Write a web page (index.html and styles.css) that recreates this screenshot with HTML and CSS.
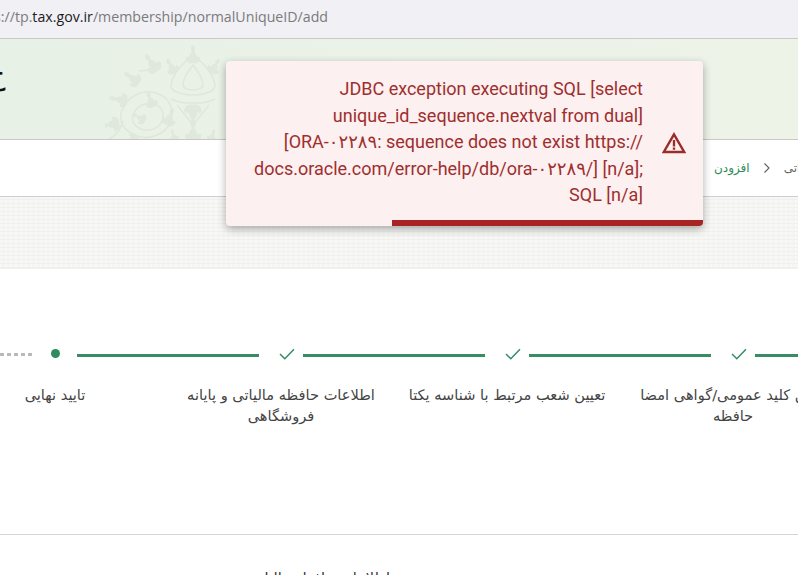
FILE: index.html
```html
<!DOCTYPE html>
<html lang="fa">
<head>
<meta charset="utf-8">
<title>normalUniqueID</title>
<link rel="stylesheet" href="styles.css">
</head>
<body>
<div class="page">
  <div class="addressbar"><span class="url">s://tp.<b class="host">tax.gov.ir</b>/membership/normalUniqueID/add</span></div>
  <header class="banner">
    <span class="brand" dir="rtl">ج</span>
    <svg class="ornament" viewBox="0 0 180 100" width="180" height="100" aria-hidden="true">
      <defs>
        <path id="leaf" d="M0 0c-5-3-6-9 0-14c6 5 5 11 0 14z"/>
        <g id="spray">
          <use href="#leaf"/>
          <use href="#leaf" transform="rotate(-50) scale(.75)"/>
          <use href="#leaf" transform="rotate(50) scale(.75)"/>
          <use href="#leaf" transform="translate(0 -12) scale(.6)"/>
        </g>
      </defs>
      <g class="orn-soft">
        <g class="orn-fill">
          <use href="#spray" transform="translate(88 18) scale(.9)"/>
          <use href="#spray" transform="translate(70 28) rotate(-30) scale(.8)"/>
          <use href="#spray" transform="translate(52 26) rotate(-35)"/>
          <use href="#spray" transform="translate(34 38) rotate(-55) scale(.9)"/>
          <use href="#spray" transform="translate(22 56) rotate(-80) scale(.9)"/>
          <use href="#spray" transform="translate(14 78) rotate(-100) scale(.9)"/>
          <use href="#spray" transform="translate(32 92) rotate(-125) scale(.8)"/>
          <use href="#spray" transform="translate(48 62) rotate(-20) scale(.8)"/>
          <use href="#spray" transform="translate(62 80) rotate(20) scale(.9)"/>
          <use href="#spray" transform="translate(40 76) rotate(-60) scale(.7)"/>
          <use href="#spray" transform="translate(88 60) rotate(180) scale(1.1)"/>
          <use href="#spray" transform="translate(106 28) rotate(30) scale(.8)"/>
          <use href="#spray" transform="translate(88 96) scale(1)"/>
          <use href="#spray" transform="translate(70 96) rotate(-15) scale(.6)"/>
          <use href="#spray" transform="translate(106 96) rotate(15) scale(.6)"/>
        </g>
        <g class="orn-line">
          <path d="M88 8c-8 10-20 18-22 32-1 6 10 10 22 10s23-4 22-10c-2-14-14-22-22-32z"/>
          <path d="M88 20c-4 6-10 12-10 20 0 3 5 5 10 5s10-2 10-5c0-8-6-14-10-20z"/>
          <path d="M16 68c6-18 24-26 40-18 10 5 14 18 8 30-6 10-22 16-34 10-10-4-16-12-14-22z"/>
          <path d="M28 70c4-10 14-14 24-10 6 3 8 11 4 18-4 6-13 9-20 6-6-2-10-8-8-14z"/>
          <path d="M66 54c8 4 14 4 22 4s14 0 22-4M72 60l16 20 16-20"/>
          <path d="M4 94c8-4 12-10 14-18M54 18c-6 6-12 8-20 8"/>
        </g>
      </g>
    </svg>
  </header>
  <nav class="crumbs">
    <span class="crumb current">افزودن</span>
    <svg class="chev" viewBox="0 0 8 12" width="8" height="12" aria-hidden="true"><path d="M1.5 1.5 6 6l-4.5 4.5" fill="none" stroke="#666" stroke-width="1.2"/></svg>
    <span class="crumb">مالیاتی</span>
  </nav>
  <div class="texture"></div>
  <main class="content">
    <section class="stepper">
      <div class="marks">
        <span class="dots"></span>
        <span class="node"><i class="dot"></i></span>
        <span class="line"></span>
        <span class="node"><svg class="tick" viewBox="0 0 16 12" width="16" height="12" aria-hidden="true"><path d="M1 6l4.8 4.8L15 1.2" fill="none" stroke="#2e8b5f" stroke-width="1.4"/></svg></span>
        <span class="line"></span>
        <span class="node"><svg class="tick" viewBox="0 0 16 12" width="16" height="12" aria-hidden="true"><path d="M1 6l4.8 4.8L15 1.2" fill="none" stroke="#2e8b5f" stroke-width="1.4"/></svg></span>
        <span class="line"></span>
        <span class="node"><svg class="tick" viewBox="0 0 16 12" width="16" height="12" aria-hidden="true"><path d="M1 6l4.8 4.8L15 1.2" fill="none" stroke="#2e8b5f" stroke-width="1.4"/></svg></span>
        <span class="line"></span>
      </div>
      <div class="labels">
        <div class="label">تایید نهایی</div>
        <div class="label">اطلاعات حافظه مالیاتی و پایانه فروشگاهی</div>
        <div class="label">تعیین شعب مرتبط با شناسه یکتا</div>
        <div class="label">تعیین کلید عمومی/گواهی امضا حافظه</div>
      </div>
    </section>
    <hr class="rule">
    <p class="subhead" dir="rtl">اطلاعات حافظه مالیاتی</p>
  </main>
  <div class="toast" role="alert">
    <p class="toast-text">JDBC exception executing SQL [select unique_id_sequence.nextval from dual] [ORA-۰۲۲۸۹: sequence does not exist https://<wbr>docs.oracle.com/error&#8209;help/db/ora-۰۲۲۸۹/] [n/a]; SQL [n/a]</p>
    <svg class="toast-icon" viewBox="0 0 24 22" width="24" height="22" aria-hidden="true">
      <path d="M12 2.4 1.8 20h20.4z" fill="none" stroke="#9c2c2c" stroke-width="2.4" stroke-linejoin="miter"/>
      <path d="M12 8v6.5M12 15.6v2.2" stroke="#9c2c2c" stroke-width="2.4" fill="none"/>
    </svg>
    <div class="toast-progress"></div>
  </div>
</div>
</body>
</html>
```
FILE: styles.css
```css
* { box-sizing: border-box; }
html, body { margin: 0; padding: 0; }
body { background: #fff; font-family: Roboto, "DejaVu Sans", sans-serif; }
.page { position: relative; width: 798px; height: 575px; overflow: hidden; }

.addressbar { height: 39px; background: #f0f0f5; border-bottom: 1px solid #c9c9c9; padding-top: 7px; }
.url { display: block; margin-left: -6px; font: 14.2px/20px "Open Sans", sans-serif; color: #7b7b7b; white-space: nowrap; }
.host { font-weight: 400; color: #1c1c1c; }

.banner { position: relative; height: 100px; background: linear-gradient(90deg, #e8f1e6, #eef3e8); overflow: hidden; display: flex; align-items: center; }
.brand { margin-left: -14px; margin-top: -30px; font: 400 30px/40px "DejaVu Sans", sans-serif; color: #111; }
.ornament { position: absolute; left: 105px; top: 6px; }
.orn-soft { filter: blur(.7px); }
.orn-fill { fill: #e0e8dc; }
.orn-line { fill: none; stroke: #dfe7db; stroke-width: 1.5; }

.crumbs { height: 58px; background: #fff; border-top: 1px solid #c9c9c9; border-bottom: 1px solid #cfcfcf; display: flex; justify-content: flex-end; align-items: center; gap: 13px; margin-right: -20px; font: 12px/16px "DejaVu Sans", sans-serif; }
.crumb { color: #666; }
.current { color: #2e8b57; }

.texture { height: 72px; background-color: #f5f5f3; background-image: repeating-linear-gradient(0deg, #f0f0ed 0 1px, transparent 1px 4px), repeating-linear-gradient(90deg, #f8f8f6 0 2px, transparent 2px 5px); border-bottom: 1px solid #f0f0f0; }

.content { background: #fff; }
.stepper { height: 265px; padding-top: 76px; }
.marks { position: relative; display: flex; align-items: center; height: 18px; width: 1100px; padding-left: 33px; }
.node { width: 44px; flex: none; display: flex; justify-content: center; align-items: center; padding-left: 12px; }
.node:nth-child(2) { padding-left: 0; }
.dot { width: 9px; height: 9px; border-radius: 50%; background: #2e8b5f; display: block; margin-top: -1px; }
.line { width: 182px; height: 3px; background: #388e62; flex: none; margin-top: 2px; }
.dots { position: absolute; left: 0; top: 8px; width: 33px; height: 3px; background: repeating-linear-gradient(90deg, #b9b9b9 0 4px, transparent 4px 7px); }
.labels { display: flex; width: 1100px; margin-left: -58px; margin-top: 21px; }
.label { width: 226px; flex: none; padding: 0 8px; text-align: center; direction: rtl; font: 14.6px/21px "DejaVu Sans", sans-serif; color: #444; }

.rule { margin: 0; border: 0; border-top: 1px solid #d4d4d4; }
.subhead { margin: 33px 0 0; padding-right: 408px; font: 14.5px/21px "DejaVu Sans", sans-serif; color: #333; white-space: nowrap; }

.toast { position: absolute; left: 226px; top: 61px; width: 477px; height: 165px; background: #fdf0f0; border-radius: 4px; box-shadow: 0 3px 8px rgba(0,0,0,.32); display: flex; justify-content: flex-end; align-items: center; gap: 19px; padding: 0 17px 2px 0; overflow: hidden; }
.toast-text { margin: 0; width: 392px; text-align: right; font: 18px/26.4px Roboto, "DejaVu Sans", sans-serif; color: #9e2f2f; }
.toast-icon { flex: none; }
.toast-progress { position: absolute; right: 0; bottom: 0; width: 311px; height: 6px; background: #a82424; }
```
